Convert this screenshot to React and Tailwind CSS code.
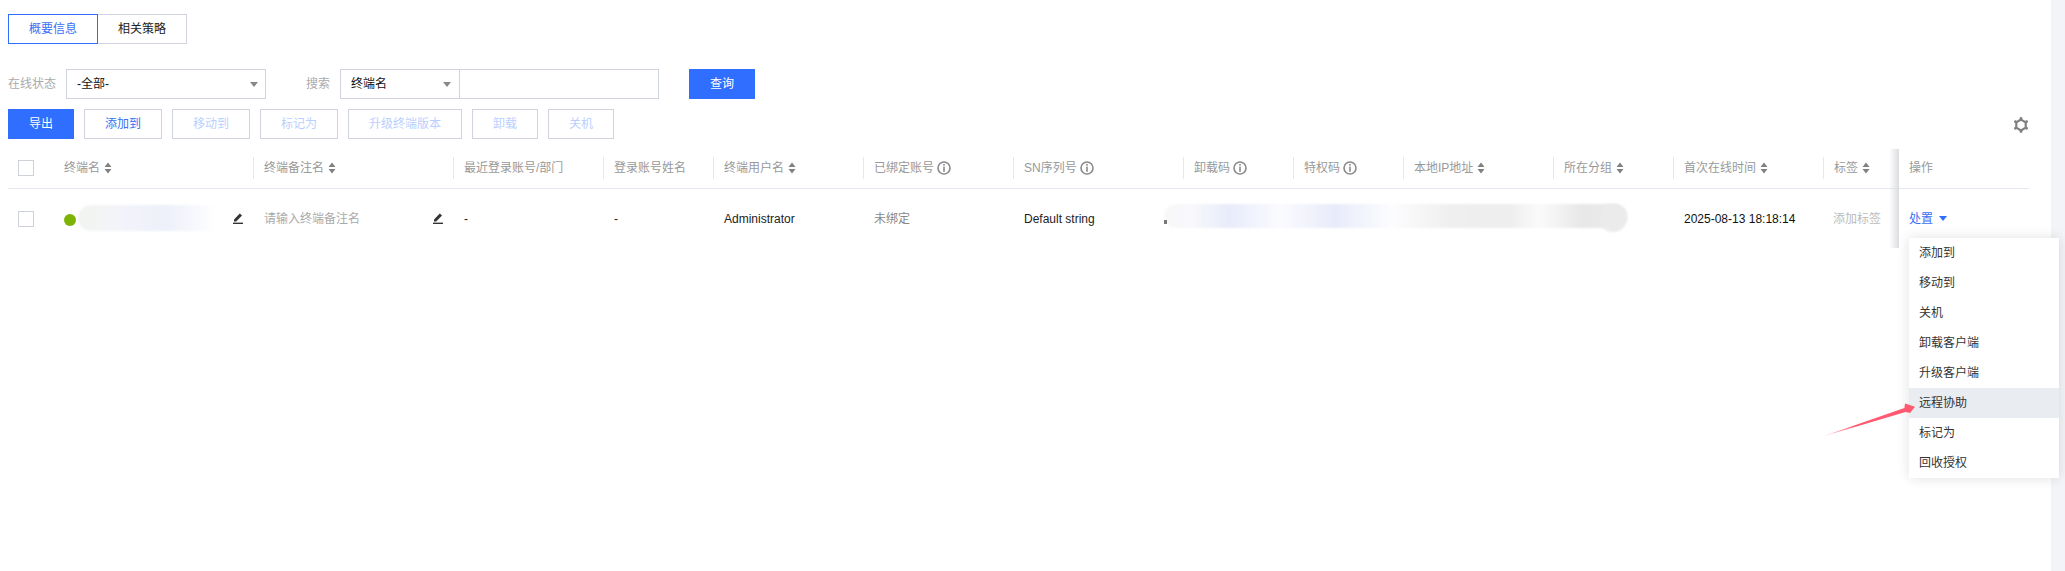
import React from 'react';

const btnDisabled = 'h-[30px] border border-[#cfd4de] bg-white text-[#b9d0ff] flex items-center justify-center';

function SortIcon() {
  return (
    <svg width="8" height="12" viewBox="0 0 8 12" className="ml-1 shrink-0">
      <path d="M4 0.5 L7.5 5 H0.5 Z M4 11.5 L0.5 7 H7.5 Z" fill="#808080" />
    </svg>
  );
}

function InfoIcon() {
  return (
    <svg width="14" height="14" viewBox="0 0 14 14" className="ml-[3px] shrink-0">
      <circle cx="7" cy="7" r="6" fill="none" stroke="#8a8a8a" strokeWidth="1.6" />
      <rect x="6.2" y="3" width="1.6" height="1.6" fill="#8a8a8a" />
      <rect x="6.2" y="5.6" width="1.6" height="5.2" fill="#8a8a8a" />
    </svg>
  );
}

function Caret({ color = '#888888' }) {
  return (
    <svg width="8" height="5" viewBox="0 0 8 5" className="shrink-0">
      <path d="M0 0 H8 L4 5 Z" fill={color} />
    </svg>
  );
}

function EditIcon() {
  return (
    <svg width="10" height="11" viewBox="0 0 10 11" className="shrink-0">
      <path d="M1 8.6 L1 6.6 L6.8 0.6 L9 2.6 L3.2 8.6 Z" fill="#333333" />
      <rect x="0" y="9.6" width="10" height="1.4" fill="#333333" />
    </svg>
  );
}

function GearIcon() {
  return (
    <svg width="16" height="16" viewBox="0 0 16 16">
      <polygon points="8,2.6 12.7,5.3 12.7,10.7 8,13.4 3.3,10.7 3.3,5.3" fill="none" stroke="#808080" strokeWidth="2.2" />
      <circle cx="8" cy="1.5" r="1.4" fill="#808080" />
      <circle cx="13.6" cy="4.7" r="1.4" fill="#808080" />
      <circle cx="13.6" cy="11.3" r="1.4" fill="#808080" />
      <circle cx="8" cy="14.5" r="1.4" fill="#808080" />
      <circle cx="2.4" cy="11.3" r="1.4" fill="#808080" />
      <circle cx="2.4" cy="4.7" r="1.4" fill="#808080" />
    </svg>
  );
}

function Checkbox() {
  return <span className="block w-4 h-4 border border-[#ccd1da] bg-white" />;
}

// header columns, widths read off the separators
const columns = [
  { label: '终端名', w: 'w-[200px]', sort: true, noSep: true },
  { label: '终端备注名', w: 'w-[200px]', sort: true },
  { label: '最近登录账号/部门', w: 'w-[150px]' },
  { label: '登录账号姓名', w: 'w-[110px]' },
  { label: '终端用户名', w: 'w-[150px]', sort: true },
  { label: '已绑定账号', w: 'w-[150px]', info: true },
  { label: 'SN序列号', w: 'w-[170px]', info: true },
  { label: '卸载码', w: 'w-[110px]', info: true },
  { label: '特权码', w: 'w-[110px]', info: true },
  { label: '本地IP地址', w: 'w-[150px]', sort: true },
  { label: '所在分组', w: 'w-[120px]', sort: true },
  { label: '首次在线时间', w: 'w-[150px]', sort: true },
  { label: '标签', w: 'w-[76px]', sort: true },
];

const menuItems = ['添加到', '移动到', '关机', '卸载客户端', '升级客户端', '远程协助', '标记为', '回收授权'];

export default function App() {
  return (
    <div className='relative flex w-full h-[571px] overflow-hidden bg-white text-xs font-["Liberation_Sans","Noto_Sans_CJK_SC",sans-serif]'>
      <main className="w-[2051px] pt-[14px] pl-2">
        <div className="flex h-[30px]">
          <div className="w-[90px] flex items-center justify-center border border-[#306eff] text-[#3b6ff5]">概要信息</div>
          <div className="w-[89px] flex items-center justify-center border border-l-0 border-[#cfd4de] text-[#222222]">相关策略</div>
        </div>

        <div className="flex items-center h-[30px] mt-[25px]">
          <span className="w-[58px] text-[#aaaaaa]">在线状态</span>
          <div className="w-[200px] h-[30px] border border-[#cfd4de] flex items-center justify-between pl-[10px] pr-[7px] text-[#111111]">
            <span>-全部-</span>
            <Caret />
          </div>
          <span className="ml-10 w-[34px] text-[#aaaaaa]">搜索</span>
          <div className="w-[120px] h-[30px] border border-[#cfd4de] flex items-center justify-between pl-[10px] pr-2 text-[#111111]">
            <span>终端名</span>
            <Caret />
          </div>
          <div className="w-[199px] h-[30px] border border-l-0 border-[#cfd4de]" />
          <button className="ml-[30px] w-[66px] h-[30px] bg-[#306eff] text-white">查询</button>
        </div>

        <div className="flex items-center gap-[10px] h-[30px] mt-[10px]">
          <button className="w-[66px] h-[30px] bg-[#306eff] text-white">导出</button>
          <button className="w-[78px] h-[30px] border border-[#cfd4de] text-[#3b6ff5]">添加到</button>
          <button className={`w-[78px] ${btnDisabled}`}>移动到</button>
          <button className={`w-[78px] ${btnDisabled}`}>标记为</button>
          <button className={`w-[114px] ${btnDisabled}`}>升级终端版本</button>
          <button className={`w-[66px] ${btnDisabled}`}>卸载</button>
          <button className={`w-[66px] ${btnDisabled}`}>关机</button>
          <div className="ml-auto mr-[22px] mt-[2px]">
            <GearIcon />
          </div>
        </div>

        <div className="w-[2021px] mt-[9px]">
          {/* table head */}
          <div className="flex items-center h-[41px] border-b border-[#e4e7ee]">
            <div className="w-[45px] pl-[10px]"><Checkbox /></div>
            {columns.map((col) => (
              <div key={col.label} className={`${col.w} h-[22px] flex items-center pl-[10px] text-[#999999] ${col.noSep ? 'border-l border-transparent' : 'border-l border-[#e6e8ec]'}`}>
                <span>{col.label}</span>
                {col.sort && <SortIcon />}
                {col.info && <InfoIcon />}
              </div>
            ))}
            <div className="relative w-[130px] h-[22px] flex items-center pl-[10px] text-[#999999]">
              <span>操作</span>
              <div className="absolute left-[-10px] top-[-8px] bottom-[-10px] w-[10px] bg-gradient-to-r from-transparent to-[#dcdde0]" />
            </div>
          </div>

          {/* table row */}
          <div className="flex items-center h-[59px] text-[#222222]">
            <div className="w-[45px] pl-[10px]"><Checkbox /></div>
            <div className="w-[200px] flex items-center pl-[11px]">
              <span className="w-3 h-3 mt-[2px] rounded-full bg-[#7cb305] shrink-0" />
              <div className="ml-[2px] w-[138px] h-[26px] mb-[1px] rounded-l-[14px] blur-[1px] bg-[linear-gradient(to_right,#f2f4f0,#f3f4fa_30%,#eef0fa_65%,#ffffff)]" />
              <div className="ml-[17px]"><EditIcon /></div>
            </div>
            <div className="w-[200px] flex items-center justify-between pl-[11px] pr-[10px] text-[#aaaaaa]">
              <span>请输入终端备注名</span>
              <EditIcon />
            </div>
            <div className="w-[150px] pl-[11px]">-</div>
            <div className="w-[110px] pl-[11px]">-</div>
            <div className="w-[150px] pl-[11px]">Administrator</div>
            <div className="w-[150px] pl-[11px] text-[#888888]">未绑定</div>
            <div className="w-[151px] pl-[11px]">Default string</div>
            <div className="w-[509px]">
              <div className="relative w-[463px] h-[24px] mb-[5px]">
                <div className="h-full rounded-[12px] blur-[1px] bg-[linear-gradient(to_right,#f8f8f8,#f9f9fc_6%,#e8ebfa_14%,#fbfbff_25%,#e8ebfa_37%,#fdfdff_49%,#efefef_62%,#eeeeee_75%,#fbfbfb_81%,#e8e8e8_90%,#ebebeb)]" />
                <div className="absolute right-0 top-0 w-[28px] h-[28px] rounded-full bg-[#ebebeb] blur-[1px]" />
                <div className="absolute left-0 top-[16px] w-[3px] h-[4px] bg-[#777777]" />
              </div>
            </div>
            <div className="w-[150px] pl-[11px] text-[#111111]">2025-08-13 18:18:14</div>
            <div className="w-[76px] pl-[10px] text-[#bbbbbb]">添加标签</div>
            <div className="relative w-[130px] self-stretch flex items-center gap-[6px] pl-[10px] text-[#3b6ff5]">
              <span>处置</span>
              <Caret color="#306eff" />
              <div className="absolute left-[-10px] top-0 bottom-0 w-[10px] bg-gradient-to-r from-transparent to-[#dcdde0]" />
            </div>
          </div>
        </div>
      </main>

      <div className="flex-1 bg-[#f3f4f8]" />

      {/* dropdown menu */}
      <div className="absolute left-[1909px] top-[238px] w-[150px] bg-white shadow-[0_0_12px_rgba(0,0,0,0.12)] text-[#333333]">
        {menuItems.map((item) => (
          <div key={item} className={`h-[30px] flex items-center pl-[10px] ${item === '远程协助' ? 'bg-[#e9ecf1]' : ''}`}>
            {item}
          </div>
        ))}
      </div>

      {/* annotation arrow */}
      <svg width="105" height="45" viewBox="0 0 105 45" className="absolute left-[1815px] top-[400px]">
        <defs>
          <linearGradient id="arrowFade" x1="0" y1="1" x2="1" y2="0">
            <stop offset="0" stopColor="#ff5a70" stopOpacity="0.15" />
            <stop offset="0.35" stopColor="#ff5a70" />
          </linearGradient>
        </defs>
        <polygon points="6,37 89.4,8 90,3.5 100,6.7 95,13 90.6,12" fill="url(#arrowFade)" />
      </svg>
    </div>
  );
}
